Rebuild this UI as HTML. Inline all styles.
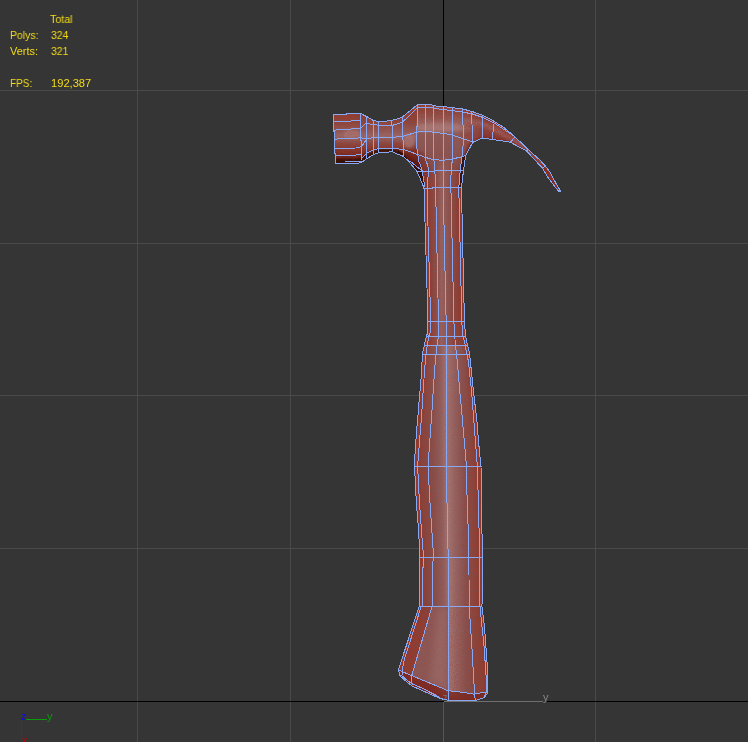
<!DOCTYPE html>
<html><head><meta charset="utf-8"><title>viewport</title>
<style>
html,body{margin:0;padding:0;background:#353535;overflow:hidden}
body{width:748px;height:742px;position:relative;font-family:"Liberation Sans",sans-serif}
svg{position:absolute;left:0;top:0;display:block}
.t{position:absolute;color:#f4dc18;font-size:11px;line-height:16px;white-space:pre;font-family:"Liberation Sans",sans-serif;transform-origin:0 0;will-change:transform}
</style></head><body>
<svg width="748" height="742" viewBox="0 0 748 742">
<defs>
<linearGradient id="g" gradientUnits="userSpaceOnUse" x1="400" y1="0" x2="495" y2="0"><stop offset="0.000" stop-color="#84423a"/><stop offset="0.232" stop-color="#834640"/><stop offset="0.337" stop-color="#86504c"/><stop offset="0.421" stop-color="#8f5d5b"/><stop offset="0.489" stop-color="#a27573"/><stop offset="0.558" stop-color="#956462"/><stop offset="0.653" stop-color="#885250"/><stop offset="0.779" stop-color="#84463e"/><stop offset="1.000" stop-color="#843e34"/></linearGradient>
<linearGradient id="gu" gradientUnits="userSpaceOnUse" x1="424" y1="0" x2="466" y2="0"><stop offset="0.000" stop-color="#84423a"/><stop offset="0.143" stop-color="#84463f"/><stop offset="0.286" stop-color="#89504c"/><stop offset="0.417" stop-color="#96625f"/><stop offset="0.524" stop-color="#8f5a57"/><stop offset="0.667" stop-color="#884c47"/><stop offset="0.810" stop-color="#85443c"/><stop offset="1.000" stop-color="#843e34"/></linearGradient>
<filter id="nz" x="0" y="0" width="100%" height="100%" color-interpolation-filters="sRGB"><feTurbulence type="fractalNoise" baseFrequency="0.9" numOctaves="1" seed="7" result="t"/><feColorMatrix in="t" type="matrix" values="0 0 0 0 0.64  0 0 0 0 0.22  0 0 0 0 0.16  6 0 0 0 -2.75"/></filter>
<linearGradient id="nm" gradientUnits="userSpaceOnUse" x1="400" y1="0" x2="495" y2="0"><stop offset="0.000" stop-color="#fff"/><stop offset="0.232" stop-color="#ddd"/><stop offset="0.326" stop-color="#777"/><stop offset="0.411" stop-color="#2a2a2a"/><stop offset="0.611" stop-color="#2a2a2a"/><stop offset="0.705" stop-color="#777"/><stop offset="0.789" stop-color="#ddd"/><stop offset="1.000" stop-color="#fff"/></linearGradient>
<linearGradient id="nmu" gradientUnits="userSpaceOnUse" x1="424" y1="0" x2="466" y2="0"><stop offset="0.000" stop-color="#fff"/><stop offset="0.167" stop-color="#ddd"/><stop offset="0.286" stop-color="#777"/><stop offset="0.381" stop-color="#2a2a2a"/><stop offset="0.595" stop-color="#2a2a2a"/><stop offset="0.690" stop-color="#777"/><stop offset="0.810" stop-color="#ddd"/><stop offset="1.000" stop-color="#fff"/></linearGradient>
<linearGradient id="nh" gradientUnits="userSpaceOnUse" x1="0" y1="104" x2="0" y2="172"><stop offset="0" stop-color="#ddd"/><stop offset="0.2" stop-color="#888"/><stop offset="0.32" stop-color="#111"/><stop offset="1" stop-color="#111"/></linearGradient>
<linearGradient id="nf" gradientUnits="userSpaceOnUse" x1="0" y1="113" x2="0" y2="164"><stop offset="0" stop-color="#ddd"/><stop offset="0.22" stop-color="#888"/><stop offset="0.4" stop-color="#222"/><stop offset="0.58" stop-color="#888"/><stop offset="0.75" stop-color="#bbb"/><stop offset="1" stop-color="#555"/></linearGradient>
<mask id="mk" maskUnits="userSpaceOnUse" x="330" y="100" width="240" height="610"><rect x="330" y="100" width="240" height="610" fill="url(#nm)"/><rect x="400" y="100" width="100" height="245.5" fill="url(#nmu)"/><path d="M432 606.5H448.5V691L411.5 675.5Z" fill="#2a2a2a"/><path d="M448.5 606.5H469L474.5 694L448.5 691Z" fill="#555"/><rect x="403" y="100" width="62" height="72" fill="url(#nh)"/><rect x="330" y="100" width="73" height="72" fill="url(#nf)"/><rect x="465" y="100" width="110" height="100" fill="#aaa"/></mask>
<linearGradient id="gh" gradientUnits="userSpaceOnUse" x1="0" y1="104" x2="0" y2="172">
<stop offset="0" stop-color="#8a443c"/><stop offset="0.1" stop-color="#8a4a42"/><stop offset="0.25" stop-color="#95605c"/><stop offset="0.36" stop-color="#a27573"/><stop offset="0.44" stop-color="#8e5a58"/><stop offset="0.75" stop-color="#895452"/><stop offset="1" stop-color="#895452" stop-opacity="0"/>
</linearGradient>
<linearGradient id="gn" gradientUnits="userSpaceOnUse" x1="0" y1="113" x2="0" y2="164">
<stop offset="0" stop-color="#8c4036"/><stop offset="0.16" stop-color="#8a463c"/><stop offset="0.36" stop-color="#925a56"/><stop offset="0.46" stop-color="#9a6866"/><stop offset="0.6" stop-color="#884a44"/><stop offset="0.75" stop-color="#803228"/><stop offset="0.88" stop-color="#642018"/><stop offset="1" stop-color="#4a1210"/>
</linearGradient>
<linearGradient id="gc" gradientUnits="userSpaceOnUse" x1="466" y1="110" x2="560" y2="190">
<stop offset="0" stop-color="#8a4a46"/><stop offset="0.25" stop-color="#86362e"/><stop offset="0.6" stop-color="#7c2a22"/><stop offset="1" stop-color="#70241e"/>
</linearGradient>
<linearGradient id="gcl" gradientUnits="userSpaceOnUse" x1="458" y1="0" x2="484" y2="0"><stop offset="0" stop-color="#873d35" stop-opacity="0"/><stop offset="1" stop-color="#873d35"/></linearGradient>
<filter id="b1" x="-30%" y="-30%" width="160%" height="160%"><feGaussianBlur stdDeviation="0.7"/></filter>
<filter id="b2" x="-20%" y="-20%" width="140%" height="140%"><feGaussianBlur stdDeviation="1.6"/></filter>
<filter id="b4" x="-30%" y="-30%" width="160%" height="160%"><feGaussianBlur stdDeviation="3.5"/></filter>
<clipPath id="cp"><path d="M333.5 114.5L346 114.5L346 113.5L360.7 113.5L365.6 116.1L367.2 116.9L372.8 120.1L378.5 121.7L391.5 120.6L402 117.4L417.7 104.4L430.7 104.4L433.5 105.8L443.5 106.6L452.1 107.7L462.2 108.9L471.5 111.3L482 115L491.7 119.8L503.6 127.4L514.8 136.7L528.5 149.8L539.7 159.9L545.5 166L550 172.3L555.2 182L560.6 191.4L558.6 191.2L553.5 184.8L548 177.5L542.3 168L526.6 151L510.4 142.3L500 140.4L492.1 139.6L482.8 138L478 140L472.7 142.4L469.9 147.7L465.9 155.1L465.3 158.5L464.3 164.5L463.6 170.6L462.6 177.3L461.6 186.8L461.4 188L462 213L463 257.7L464 303L465 329L465.8 336.5L466.6 341.2L467.5 345.5L468.8 350.3L469.7 354.6L472.9 386L475.3 407L477 422L478.4 440L479.8 454.8L481 466.2L481.4 507L482 533.6L482.6 560L482.7 592L481.9 606.2L484.6 628L487.3 665.9L487.8 679.4L487.8 692.6L484.1 697.8L475.3 700.5L448.8 700.5L440 698.4L421.9 690.4L412 686L405.8 681.1L400.2 676.1L398.3 669.9L419.3 606.2L419.3 564.6L419.9 557.4L418.6 531L416.2 500L415.5 484.6L414.5 466.2L415.1 452.3L416.2 436L418 415L418.6 407L420.5 386L421.5 371.6L422.4 354.6L423.2 350.3L424.4 345.5L425.2 341L426.5 336.5L427.5 332.6L427.7 321.7L427 288L426 255L425 222L424 188.6L423.8 187.4L421.6 182.3L418.6 174.9L416.7 170.8L407.4 160.2L402 155.4L397.1 154.2L392.7 151.7L384.7 152.3L378.9 152.5L373.3 154.9L366.8 158.5L362.3 161.8L356.7 163.8L335.5 163.8L335.5 153L334.5 153L334.5 131.5L333.5 131.5Z"/></clipPath>
</defs>
<rect width="748" height="742" fill="#353535"/>
<g stroke="#4a4a4a" stroke-width="1" shape-rendering="crispEdges">
<path d="M137.5 0V742M290.5 0V742M595.5 0V742M0 90.5H748M0 243.5H748M0 395.5H748M0 548.5H748"/>
</g>
<g stroke="#000" stroke-width="1" shape-rendering="crispEdges"><path d="M443.5 0V106M0 701.5H444M546.5 701.5H748"/></g>
<path d="M444 701.5H543" stroke="#6e6e6e" stroke-width="1" shape-rendering="crispEdges"/>
<path d="M443.5 702V742" stroke="#d0202a" stroke-width="1" shape-rendering="crispEdges"/>
<g clip-path="url(#cp)">
<rect x="330" y="100" width="240" height="366.5" fill="url(#g)"/>
<rect x="330" y="466.5" width="240" height="91" fill="url(#g)" transform="translate(1.8 0)"/>
<rect x="330" y="557.5" width="240" height="150" fill="url(#g)" transform="translate(3.3 0)"/>
<rect x="400" y="100" width="100" height="245.5" fill="url(#gu)"/>
<path d="M333.5 114.5L346 114.5L346 113.5L360.7 113.5L365.6 116.1L367.2 116.9L372.8 120.1L378.5 121.7L391.5 120.6L402 117.4L417.7 104.4L430.7 104.4L433.5 105.8L443.5 106.6L452.1 107.7L462.2 108.9L471.5 111.3L482 115L491.7 119.8L503.6 127.4L514.8 136.7L528.5 149.8L539.7 159.9L545.5 166L550 172.3L555.2 182L560.6 191.4L558.6 191.2L553.5 184.8L548 177.5L542.3 168L526.6 151L510.4 142.3L500 140.4L492.1 139.6L482.8 138L478 140L472.7 142.4L469.9 147.7L465.9 155.1L465.3 158.5L464.3 164.5L463.6 170.6L462.6 177.3L461.6 186.8L461.4 188L462 213L463 257.7L464 303L465 329L465.8 336.5L466.6 341.2L467.5 345.5L468.8 350.3L469.7 354.6L472.9 386L475.3 407L477 422L478.4 440L479.8 454.8L481 466.2L481.4 507L482 533.6L482.6 560L482.7 592L481.9 606.2L484.6 628L487.3 665.9L487.8 679.4L487.8 692.6L484.1 697.8L475.3 700.5L448.8 700.5L440 698.4L421.9 690.4L412 686L405.8 681.1L400.2 676.1L398.3 669.9L419.3 606.2L419.3 564.6L419.9 557.4L418.6 531L416.2 500L415.5 484.6L414.5 466.2L415.1 452.3L416.2 436L418 415L418.6 407L420.5 386L421.5 371.6L422.4 354.6L423.2 350.3L424.4 345.5L425.2 341L426.5 336.5L427.5 332.6L427.7 321.7L427 288L426 255L425 222L424 188.6L423.8 187.4L421.6 182.3L418.6 174.9L416.7 170.8L407.4 160.2L402 155.4L397.1 154.2L392.7 151.7L384.7 152.3L378.9 152.5L373.3 154.9L366.8 158.5L362.3 161.8L356.7 163.8L335.5 163.8L335.5 153L334.5 153L334.5 131.5L333.5 131.5Z" fill="none" stroke="#923428" stroke-width="6" opacity=".75" filter="url(#b2)"/>
<!-- flared grip: shift highlight left -->
<path d="M398 606L432 606L411 676L448 691L448 701L398 701Z" fill="#8c3c32" opacity=".55" filter="url(#b2)"/>
<path d="M432 606.5H448.5V691L411.5 675.5Z" fill="#8c5856"/>
<path d="M438 608L448 608L448 690L430 682Z" fill="#a27674" opacity=".5" filter="url(#b4)"/>
<!-- head main -->
<rect x="403" y="100" width="90" height="72" fill="url(#gh)"/>
<!-- claw -->
<path d="M455 100H570V200H455Z" fill="url(#gcl)"/>
<path d="M464 121L480 123.5L495 129L510 137.5L526 150L541 165" fill="none" stroke="#99686a" stroke-width="6" opacity=".75" filter="url(#b2)"/>
<path d="M473 144L478.7 140.6L483.4 138.7L492.3 139.7L510 143L527 152.5L542 168L558 191" fill="none" stroke="#6c1c16" stroke-width="4" opacity=".7" filter="url(#b2)"/>
<path d="M462 109L471.5 111.3L482 115L494.6 121.8L514.3 136.8" fill="none" stroke="#9a3426" stroke-width="4" opacity=".7" filter="url(#b2)"/>
<!-- neck + face -->
<rect x="330" y="110" width="73" height="60" fill="url(#gn)"/>
<path d="M402 117.4L417.7 104.4L416.1 132.3L416.9 148.5L422 170L404.4 158.2L404 155.8L402.8 136.4Z" fill="url(#gn)"/>
<ellipse cx="352" cy="134" rx="9" ry="5" fill="#aa7674" opacity=".7" filter="url(#b2)"/>
<ellipse cx="409" cy="141" rx="6" ry="7" fill="#a87674" opacity=".8" filter="url(#b2)"/>
<ellipse cx="440" cy="127" rx="22" ry="5" fill="#ab7a78" opacity=".55" filter="url(#b2)"/>
<path d="M417 150L425.4 154L426.4 162L428.5 170.2L428.8 176.7L427.5 177.1L427.5 190L424 190L416 168L406 158Z" fill="#7a2a22" opacity=".55" filter="url(#b2)"/>
<!-- speckle -->
<rect x="330" y="100" width="240" height="610" filter="url(#nz)" mask="url(#mk)" opacity=".8"/>
<!-- shadows -->
<path d="M398.3 669.9L411.4 675.5L447.8 690.7L448.5 700.5L440 698.4L412 686L400 676Z" fill="#74201a" opacity=".6"/>
<path d="M447.8 690.7L473.8 694.1L486.3 691.9L487.8 692.6L484.1 697.8L475.3 700.5L448.8 700.5Z" fill="#76261e" opacity=".75"/>
<path d="M335 161.5L357 161.5L364 159L374 153L379 151L392.5 150.3L400 153" fill="none" stroke="#2a0706" stroke-width="4.5" opacity=".85" filter="url(#b2)"/>
<path d="M398 152.5L402 155.4L407.4 160.2L416.7 170.8L418.6 174.9L421.6 182.3L424 188.6L424.4 187L423.9 176.3L422.7 175.8L422.4 171.2L420.8 169.8L412.2 162.9L406.8 158.8L403.6 153.5L398 151Z" fill="#2a0706" opacity=".9" filter="url(#b1)"/>
<path d="M404 154L412 161.5L420 168.5" fill="none" stroke="#4a100c" stroke-width="3" opacity=".6" filter="url(#b2)"/>
<path d="M466.5 155.1L465.3 158.5L464.3 164.5L463.6 170.6L462.6 177.3L461.8 188L459 188L459.5 177.3L460.6 168.6L461.6 158.5L462.6 155.8Z" fill="#2e0807" opacity=".85" filter="url(#b1)"/>
<path d="M473.5 142.5L470 148L466.5 155L464.8 163" fill="none" stroke="#3a0c0a" stroke-width="3" opacity=".75" filter="url(#b2)"/>
</g>
<g fill="none" stroke="#87a9f5" stroke-width="1" shape-rendering="crispEdges">
<path d="M333.5 114.5L346 114.5L346 113.5L360.7 113.5L365.6 116.1L367.2 116.9L372.8 120.1L378.5 121.7L391.5 120.6L402 117.4L417.7 104.4L430.7 104.4L433.5 105.8L443.5 106.6L452.1 107.7L462.2 108.9L471.5 111.3L482 115L491.7 119.8L503.6 127.4L514.8 136.7L528.5 149.8L539.7 159.9L545.5 166L550 172.3L555.2 182L560.6 191.4L558.6 191.2L553.5 184.8L548 177.5L542.3 168L526.6 151L510.4 142.3L500 140.4L492.1 139.6L482.8 138L478 140L472.7 142.4L469.9 147.7L465.9 155.1L465.3 158.5L464.3 164.5L463.6 170.6L462.6 177.3L461.6 186.8L461.4 188L462 213L463 257.7L464 303L465 329L465.8 336.5L466.6 341.2L467.5 345.5L468.8 350.3L469.7 354.6L472.9 386L475.3 407L477 422L478.4 440L479.8 454.8L481 466.2L481.4 507L482 533.6L482.6 560L482.7 592L481.9 606.2L484.6 628L487.3 665.9L487.8 679.4L487.8 692.6L484.1 697.8L475.3 700.5L448.8 700.5L440 698.4L421.9 690.4L412 686L405.8 681.1L400.2 676.1L398.3 669.9L419.3 606.2L419.3 564.6L419.9 557.4L418.6 531L416.2 500L415.5 484.6L414.5 466.2L415.1 452.3L416.2 436L418 415L418.6 407L420.5 386L421.5 371.6L422.4 354.6L423.2 350.3L424.4 345.5L425.2 341L426.5 336.5L427.5 332.6L427.7 321.7L427 288L426 255L425 222L424 188.6L423.8 187.4L421.6 182.3L418.6 174.9L416.7 170.8L407.4 160.2L402 155.4L397.1 154.2L392.7 151.7L384.7 152.3L378.9 152.5L373.3 154.9L366.8 158.5L362.3 161.8L356.7 163.8L335.5 163.8L335.5 153L334.5 153L334.5 131.5L333.5 131.5Z"/>
<path d="M333.6 121.6L351 121L360.7 120.1"/>
<path d="M333.6 130.2L347 129.2L360.7 128.6"/>
<path d="M334.5 139.1L360.7 137.9"/>
<path d="M334.7 148.4L356 148L360.7 146.8"/>
<path d="M335.3 155.7L352 155.7L361.5 154.1"/>
<path d="M345 161.8L362.3 161.8"/>
<path d="M360.7 113.5L360.7 140.5L361.7 140.5L361.7 160"/>
<path d="M360.7 128.2L365.6 123.4"/>
<path d="M361.5 146.8L366.4 139.5"/>
<path d="M362.3 158L365.6 154.5"/>
<path d="M366.8 116.5L366.8 158.1"/>
<path d="M373.3 120.1L373.3 154.9"/>
<path d="M378.9 121.7L378.9 152.5"/>
<path d="M391.9 120.6L392.7 151.7"/>
<path d="M402 117.4L402.8 136.4L404 155.8"/>
<path d="M365.6 123.8L373.3 124.2L378.9 125.4L391.9 125.5L402.4 122.2L417.3 108"/>
<path d="M360.7 137.9L366.8 138.3L378.9 137.5L392 137.4L402.8 136.4L416.1 132.3"/>
<path d="M366.8 153.3L373.3 150L378.9 148.4L392.7 148.5L403.2 149.3L416.9 154.2L425.4 157.4"/>
<path d="M417.5 104.4L417.5 126.5L416.5 127L416.1 132.3L416.9 148.5L418.1 156.6L419 162L421.4 167.6L422.4 171L422.6 175.8L423.8 176.3L424.2 187"/>
<path d="M425.4 104.4L425.4 158.4L426.4 162L427.7 165L428.5 170.2L428.8 176.7L427.5 177.1L427.5 195L428 226L431 332L429.5 334L428.7 336.5L427.2 345.5L426 354.6L425.5 359.5L424.5 371.4L423.5 386L421.6 415L417.6 466.2L419.3 500L422.5 545L423.5 555L423.5 567.5L422.5 568L422.5 606.2"/>
<path d="M433.5 105.8L433.5 159.7L434.4 162L434.4 171.3L434.8 173.6L435.9 174.5L435.9 188"/>
<path d="M443.5 106.6L443.5 187"/>
<path d="M452.5 107.7L452.5 158.5L451.5 166.6L451.1 170.6L450.8 187"/>
<path d="M462.2 108.9L463.4 132.3L463.8 138.8L462.6 150L462.6 155.8L461.6 158.5L460.6 168.6L459.5 177.3L458.9 187"/>
<path d="M471.5 111.3L472.7 142"/>
<path d="M482.4 115.4L482.8 138"/>
<path d="M494.2 123L492.1 139.6"/>
<path d="M416.1 132.3L425.4 131.1L433.5 132.3L445 133.5L452.5 135.2L463.8 138.8L472.7 142"/>
<path d="M425.4 157.4L433.5 159.7L443.5 160.3L452.2 159L462.6 156.6L465.9 155"/>
<path d="M417.1 171.5L434.4 171.5L434.4 170.5L463.6 170.5"/>
<path d="M424 188.5L432.8 188.5L432.8 187.5L461.1 187.5"/>
<path d="M417.5 107.7L425.4 107.3L433.5 108L440 109.3L452.1 110.5L462.2 112.1L471.5 113.7L482.8 117.4L494.2 123L514.8 136.7"/>
<path d="M406.8 159.5L412.2 162.9L420.8 169.8L422.3 171.3"/>
<path d="M514.8 137L510.4 142.3"/>
<path d="M528.5 149.8L526.6 151.2"/>
<path d="M545.9 165.9L542.8 167.8"/>
<path d="M435.6 188L438 298L438.7 336.5L437.5 341L436.5 350L435.5 359.5L434.5 371.8L433.5 386.5L431.7 415L428 466.2L429.8 500L433.6 557.4L432.3 566L432.1 606.2L411.7 675.6L411.4 684.2"/>
<path d="M443.2 188L446 315L446.5 322L446.5 480L448.1 553L448.5 560L448.5 700.5"/>
<path d="M450.9 188L453.9 321.7L454.5 333L455.5 345.5L456.5 353.8L457.5 364L458.5 376L459.5 388L462 415L466.5 466.2L467.1 500L468.4 534.8L469 574.6L469.1 606.2L471.8 645.6L474.6 694L475.3 700.5"/>
<path d="M458.8 188L461.9 324.6L462.2 327L463.1 336.5L464.3 341.2L465.3 345.5L466.1 350.3L467.2 354.6L468.5 362.4L469.5 372L470.5 381.5L471.5 390L473.4 415L477.3 466.2L478.3 500L479.6 549.7L479.9 606.2L484 645.6L486.3 679.4L486.3 691.9L484.1 697"/>
<path d="M427.8 321.5L464.2 321.5"/>
<path d="M426.4 336.5L466 336.5"/>
<path d="M424.4 345.5L467.5 345.5"/>
<path d="M422.2 354.5L469.7 354.5"/>
<path d="M414 466.5L482 466.5"/>
<path d="M419.9 557.5L482.7 557.5"/>
<path d="M419.3 606.5L481.9 606.5"/>
<path d="M398.3 669.9L402.1 671.5L411.4 675.5L440 687.3L447.8 690.7L456.7 691.5L473.8 694.1L486.3 691.9"/>
<path d="M421.3 606.2L404.2 660L402.1 671.2L402 675.8L406.8 680L411.6 683.6L421.5 687.9L431.4 692.9L440 697.4"/>
</g>
<g shape-rendering="crispEdges" stroke-width="1"><path d="M26 719.5H47" stroke="#0a9a0a"/><path d="M21.5 720V742" stroke="#c00000"/></g>

<path d="M443.3 695.5H446.8L444 699.6" fill="none" stroke="#6e6e6e" stroke-width="1"/>
</svg>
<div class="t" style="left:21.1px;top:708px;color:#0a0ae6">z</div><div class="t" style="left:46.5px;top:708px;color:#0a9a0a">y</div><div class="t" style="left:22px;top:731.5px;color:#c00000">x</div><div class="t" style="left:542.6px;top:689px;color:#868686">y</div>
<div class="t" style="left:50px;top:11px;transform:scaleX(.97)">Total</div>
<div class="t" style="left:10px;top:27px;transform:scaleX(.95)">Polys:</div><div class="t" style="left:50.9px;top:27px;transform:scaleX(.95)">324</div>
<div class="t" style="left:10px;top:43px">Verts:</div><div class="t" style="left:50.9px;top:43px;transform:scaleX(.95)">321</div>
<div class="t" style="left:10px;top:75px;transform:scaleX(.91)">FPS:</div><div class="t" style="left:51.2px;top:75px;transform:scaleX(1.012)">192,387</div>
</body></html>
